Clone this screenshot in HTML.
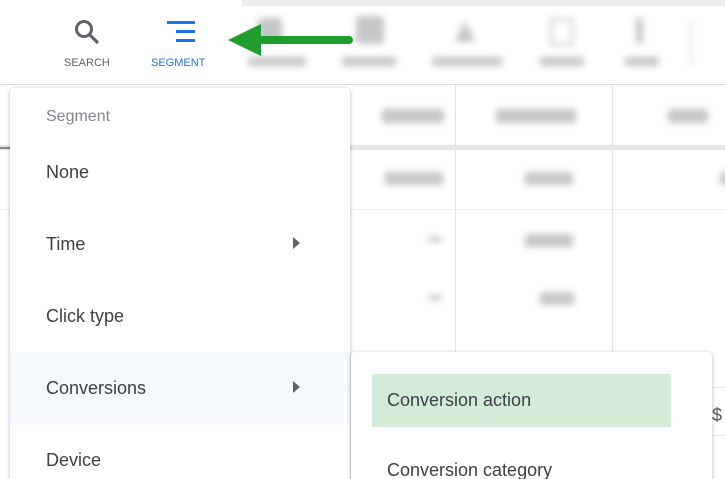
<!DOCTYPE html>
<html style="overflow:hidden;height:479px"><head><style>
body{margin:0;width:725px;height:479px;overflow:hidden;background:#fff;font-family:"Liberation Sans",Arial,sans-serif;position:relative}
.a{position:absolute}
.blur{filter:blur(3.5px)}
.g{background:#c4c6c8}
.mi{position:absolute;left:46px;font-size:18px;color:#3c4043}
</style></head><body>
<div class="a" style="left:242px;top:0;width:483px;height:6px;background:#eee"></div>
<div class="a" style="left:0;top:84px;width:725px;height:1px;background:#ddd"></div>
<div class="a blur" style="left:0;top:0;width:725px;height:84px">
 <div class="a g" style="left:258px;top:18px;width:24px;height:24px;border-radius:3px"></div>
 <div class="a g" style="left:356px;top:16px;width:28px;height:28px;border-radius:4px"></div>
 <div class="a g" style="left:455px;top:20px;width:20px;height:22px;clip-path:polygon(50% 0,100% 100%,0 100%)"></div>
 <div class="a" style="left:550px;top:18px;width:18px;height:22px;border:3px solid #cfd1d3"></div>
 <div class="a g" style="left:636px;top:18px;width:7px;height:26px"></div>
 <div class="a" style="left:690px;top:20px;width:2px;height:45px;background:#ddd"></div>
 <div class="a g" style="left:248px;top:57px;width:58px;height:9px"></div>
 <div class="a g" style="left:342px;top:57px;width:54px;height:9px"></div>
 <div class="a g" style="left:432px;top:57px;width:70px;height:9px"></div>
 <div class="a g" style="left:540px;top:57px;width:44px;height:9px"></div>
 <div class="a g" style="left:625px;top:57px;width:34px;height:9px"></div>
</div>
<div class="a" style="left:455px;top:85px;width:1px;height:267px;background:#e4e4e4"></div>
<div class="a" style="left:612px;top:85px;width:1px;height:267px;background:#e4e4e4"></div>
<div class="a" style="left:0;top:145px;width:725px;height:5px;background:#e6e6e6"></div>
<div class="a" style="left:0;top:209px;width:725px;height:1px;background:#eee"></div>
<div class="a" style="left:350px;top:387px;width:375px;height:1px;background:#e4e4e4"></div>
<div class="a" style="left:700px;top:435px;width:25px;height:1px;background:#e4e4e4"></div>
<div class="a" style="left:712px;top:405px;font-size:18px;color:#555">$</div>
<div class="a blur" style="left:350px;top:85px;width:375px;height:240px">
 <div class="a g" style="left:32px;top:24px;width:62px;height:14px"></div>
 <div class="a g" style="left:146px;top:24px;width:80px;height:14px"></div>
 <div class="a g" style="left:318px;top:24px;width:40px;height:14px"></div>
 <div class="a g" style="left:35px;top:87px;width:58px;height:13px"></div>
 <div class="a g" style="left:175px;top:87px;width:48px;height:13px"></div>
 <div class="a g" style="left:370px;top:87px;width:10px;height:13px"></div>
 <div class="a g" style="left:78px;top:152px;width:14px;height:5px"></div>
 <div class="a g" style="left:175px;top:149px;width:48px;height:13px"></div>
 <div class="a g" style="left:78px;top:210px;width:14px;height:5px"></div>
 <div class="a g" style="left:190px;top:207px;width:34px;height:13px"></div>
</div>
<div class="a" style="left:0;top:147px;width:10px;height:2px;background:#888"></div>
<svg class="a" style="left:70px;top:16px" width="34" height="34"><circle cx="14" cy="13" r="7.5" fill="none" stroke="#5f6368" stroke-width="3"/><line x1="19.5" y1="18.5" x2="28" y2="27" stroke="#5f6368" stroke-width="3.2"/></svg>
<div class="a" style="left:64px;top:57px;font-size:11px;color:#5f6368">SEARCH</div>
<div class="a" style="left:167px;top:21px;width:28px;height:3px;background:#1a73e8"></div>
<div class="a" style="left:176px;top:30px;width:19px;height:3px;background:#1a73e8"></div>
<div class="a" style="left:176px;top:39px;width:19px;height:3px;background:#1a73e8"></div>
<div class="a" style="left:151px;top:57px;font-size:11px;color:#1a73e8">SEGMENT</div>
<svg class="a" style="left:225px;top:20px" width="130" height="40"><line x1="30" y1="20" x2="124" y2="20" stroke="#1f9e2d" stroke-width="8" stroke-linecap="round"/><polygon points="3,20 36,4 36,36" fill="#1f9e2d"/></svg>
<div class="a" style="left:10px;top:88px;width:340px;height:400px;background:#fff;border-radius:4px;box-shadow:0 1px 4px rgba(0,0,0,.3)">
 <div class="a" style="left:0;top:264px;width:340px;height:72px;background:#f5f8fc"></div>
</div>
<div class="a" style="left:46px;top:108px;font-size:16px;color:#80868b">Segment</div>
<div class="mi" style="top:162px">None</div>
<div class="mi" style="top:234px">Time</div>
<div class="mi" style="top:306px">Click type</div>
<div class="mi" style="top:378px">Conversions</div>
<div class="mi" style="top:450px">Device</div>
<div class="a" style="left:293px;top:237px;border-left:7px solid #5f6368;border-top:6px solid transparent;border-bottom:6px solid transparent"></div>
<div class="a" style="left:293px;top:381px;border-left:7px solid #5f6368;border-top:6px solid transparent;border-bottom:6px solid transparent"></div>
<div class="a" style="left:351px;top:352px;width:361px;height:140px;background:#fff;border-radius:4px;box-shadow:0 1px 4px rgba(0,0,0,.3)"></div>
<div class="a" style="left:372px;top:374px;width:299px;height:53px;background:#d4ebd7"></div>
<div class="mi" style="left:387px;top:390px">Conversion action</div>
<div class="mi" style="left:387px;top:460px">Conversion category</div>
</body></html>
